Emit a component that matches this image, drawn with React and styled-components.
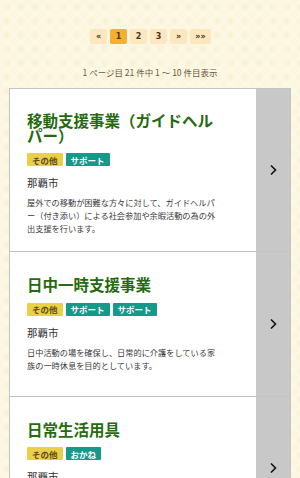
import React from 'react'
import styled, { createGlobalStyle } from 'styled-components'

const GlobalStyle = createGlobalStyle`
  body {
    margin: 0;
    font-family: "Noto Sans CJK JP", "Noto Sans", sans-serif;
    background-color: #fdf8e3;
    background-image:
      radial-gradient(circle at 50% 50%, #fbf3d9 0, #fbf3d9 3px, transparent 5px),
      radial-gradient(circle at 50% 50%, #fcf6df 0, #fcf6df 3px, transparent 5px);
    background-size: 14px 14px, 14px 14px;
    background-position: 0 0, 7px 7px;
  }
`

const Page = styled.div`
  padding-top: 29px;
`

const Pager = styled.nav`
  display: flex;
  justify-content: center;
  gap: 3px;
  padding-left: 1px;
`

const PageBtn = styled.span`
  display: flex;
  align-items: center;
  justify-content: center;
  min-width: 17px;
  padding: 0 ${p => (p.wide ? 2 : 0)}px;
  height: 15px;
  border-radius: 2px;
  background: ${p => (p.active ? '#f8ae2f' : '#fde7bf')};
  color: #4a3a22;
  font-size: 8px;
  font-weight: 700;
  font-family: "DejaVu Sans", sans-serif;
`

const Count = styled.p`
  margin: 22px 0 0;
  text-align: center;
  font-size: 8.5px;
  line-height: 12px;
  color: #6a5a48;
`

const List = styled.ul`
  list-style: none;
  margin: 10px 9px 0;
  padding: 0;
  border: 1px solid #c4c4c4;
  border-bottom: none;
  background: #fff;
`

const Item = styled.li`
  display: flex;
  border-bottom: 1px solid #c4c4c4;
`

const Body = styled.div`
  flex: 1;
  padding: ${p => p.pt}px 37px ${p => p.pb}px 17px;
`

const Title = styled.h2`
  margin: 0;
  font-size: 15.5px;
  line-height: 14.5px;
  font-weight: 700;
  color: #256a0e;
`

const Tags = styled.div`
  display: flex;
  gap: 3px;
  margin-top: ${p => p.mt}px;
`

const Tag = styled.span`
  display: inline-flex;
  align-items: center;
  height: 13px;
  padding: 0 5px;
  border-radius: 1px;
  font-size: 8.5px;
  font-weight: 700;
  background: ${p => (p.kind === 'other' ? '#ead046' : '#15998b')};
  color: ${p => (p.kind === 'other' ? '#5e4b18' : '#fff')};
`

const City = styled.p`
  margin: 9px 0 0;
  font-size: 10.5px;
  line-height: 16px;
  color: #333;
`

const Desc = styled.p`
  margin: 5px 0 0;
  font-size: 8.2px;
  line-height: 13px;
  color: #3a3a3a;
`

const Arrow = styled.div`
  width: 34px;
  flex-shrink: 0;
  background: #c8c8c8;
  display: flex;
  align-items: center;
  justify-content: center;
`

const items = [
  {
    title: '移動支援事業（ガイドヘルパー）',
    tags: [['その他', 'other'], ['サポート', 'support']],
    city: '那覇市',
    desc: '屋外での移動が困難な方々に対して、ガイドヘルパー（付き添い）による社会参加や余暇活動の為の外出支援を行います。',
    pt: 24,
    pb: 16,
    mt: 11,
  },
  {
    title: '日中一時支援事業',
    tags: [['その他', 'other'], ['サポート', 'support'], ['サポート', 'support']],
    city: '那覇市',
    desc: '日中活動の場を確保し、日常的に介護をしている家族の一時休息を目的としています。',
    pt: 25,
    pb: 24,
    mt: 11,
  },
  {
    title: '日常生活用具',
    tags: [['その他', 'other'], ['おかね', 'support']],
    city: '那覇市',
    desc: '在宅の障がいのある方に、日常生活の便宜を図るための用具を給付します。',
    pt: 25,
    pb: 24,
    mt: 11,
  },
]

const Chevron = () => (
  <svg width="10" height="12" viewBox="0 0 10 12">
    <path d="M3 1.5 L7.5 6 L3 10.5" fill="none" stroke="#111" strokeWidth="1.6" />
  </svg>
)

export default function App() {
  return (
    <Page>
      <GlobalStyle />
      <Pager>
        <PageBtn>«</PageBtn>
        <PageBtn active>1</PageBtn>
        <PageBtn>2</PageBtn>
        <PageBtn>3</PageBtn>
        <PageBtn>»</PageBtn>
        <PageBtn wide>»»</PageBtn>
      </Pager>
      <Count>1 ページ目 21 件中 1 ～ 10 件目表示</Count>
      <List>
        {items.map((it, i) => (
          <Item key={i}>
            <Body pt={it.pt} pb={it.pb}>
              <Title>{it.title}</Title>
              <Tags mt={it.mt}>
                {it.tags.map(([label, kind], j) => (
                  <Tag key={j} kind={kind}>{label}</Tag>
                ))}
              </Tags>
              <City>{it.city}</City>
              <Desc>{it.desc}</Desc>
            </Body>
            <Arrow>
              <Chevron />
            </Arrow>
          </Item>
        ))}
      </List>
    </Page>
  )
}
